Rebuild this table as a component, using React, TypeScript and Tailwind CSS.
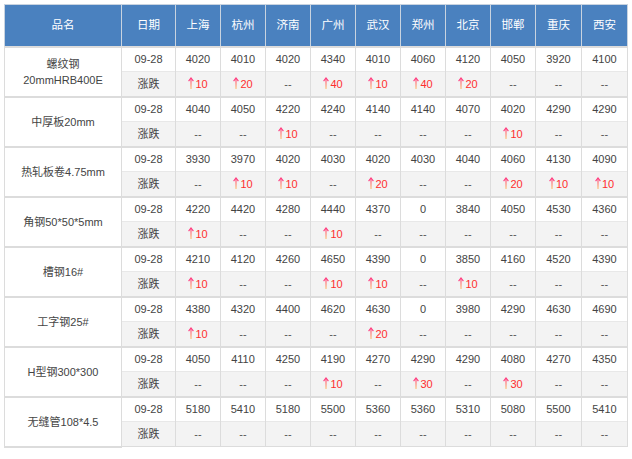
import React from 'react';

type Item = {
  name: string[];
  prices: number[];
  changes: (number | null)[];
};

const cities = ['上海', '杭州', '济南', '广州', '武汉', '郑州', '北京', '邯郸', '重庆', '西安'];
const cityWidths = [45, 45, 45, 45, 45, 45, 45, 45, 46, 46];

const items: Item[] = [
  {
    name: ['螺纹钢', '20mmHRB400E'],
    prices: [4020, 4010, 4020, 4340, 4010, 4060, 4120, 4050, 3920, 4100],
    changes: [10, 20, null, 40, 10, 40, 20, null, null, null],
  },
  {
    name: ['中厚板20mm'],
    prices: [4040, 4050, 4220, 4240, 4140, 4140, 4070, 4020, 4290, 4290],
    changes: [null, null, 10, null, null, null, null, 10, null, null],
  },
  {
    name: ['热轧板卷4.75mm'],
    prices: [3930, 3970, 4020, 4030, 4020, 4030, 4040, 4060, 4130, 4090],
    changes: [null, 10, 10, null, 20, null, null, 20, 10, 10],
  },
  {
    name: ['角钢50*50*5mm'],
    prices: [4220, 4420, 4280, 4440, 4370, 0, 3840, 4050, 4530, 4360],
    changes: [10, null, null, 10, null, null, null, null, null, null],
  },
  {
    name: ['槽钢16#'],
    prices: [4210, 4120, 4260, 4650, 4390, 0, 3850, 4160, 4520, 4390],
    changes: [10, null, null, 10, 10, null, 10, null, null, null],
  },
  {
    name: ['工字钢25#'],
    prices: [4380, 4320, 4400, 4620, 4630, 0, 3980, 4290, 4630, 4690],
    changes: [10, null, null, null, 20, null, null, null, null, null],
  },
  {
    name: ['H型钢300*300'],
    prices: [4050, 4110, 4250, 4190, 4270, 4290, 4290, 4080, 4270, 4350],
    changes: [null, null, null, 10, null, 30, null, 30, null, null],
  },
  {
    name: ['无缝管108*4.5'],
    prices: [5180, 5410, 5180, 5500, 5360, 5360, 5310, 5080, 5500, 5410],
    changes: [null, null, null, null, null, null, null, null, null, null],
  },
];

const UpArrow = () => (
  <svg width="6" height="12" viewBox="0 0 6 12" className="inline-block align-[-1px] mr-[1px]">
    <defs>
      <linearGradient id="upg" gradientUnits="userSpaceOnUse" x1="0" y1="1" x2="0" y2="12">
        <stop offset="0" stopColor="#ff3d7f" />
        <stop offset="1" stopColor="#ffc878" />
      </linearGradient>
    </defs>
    <rect x="2.4" y="1.5" width="1.2" height="10.5" fill="url(#upg)" />
    <path d="M0.6 4.2 L3 1 L5.4 4.2" stroke="#ff3d7f" strokeWidth="1.1" fill="none" />
  </svg>
);

const Change = ({ v }: { v: number | null }) =>
  v === null ? (
    <span className="text-[#555]">--</span>
  ) : (
    <span className="text-[#ff2d2d] font-medium">
      <UpArrow />
      {v}
    </span>
  );

export default function App() {
  return (
    <div
      className="w-[632px] h-[459px] bg-white pt-[4px] pl-[4px]"
      style={{ fontFamily: '"Liberation Sans", "Noto Sans CJK SC", sans-serif' }}
    >
      <table className="border-collapse table-fixed w-[623px] text-[11px] text-[#444] border border-[#dcdcdc]">
        <colgroup>
          <col className="w-[117px]" />
          <col className="w-[54px]" />
          {cityWidths.map((w, i) => (
            <col key={i} style={{ width: w }} />
          ))}
        </colgroup>
        <thead>
          <tr className="bg-[#4a81bf] text-white text-[11.5px] h-[42px]">
            <th className="font-normal border border-[#c8d3e0]">品名</th>
            <th className="font-normal border border-[#c8d3e0]">日期</th>
            {cities.map((c) => (
              <th key={c} className="font-normal border border-[#c8d3e0]">
                {c}
              </th>
            ))}
          </tr>
        </thead>
        <tbody>
          {items.map((it, gi) => (
            <React.Fragment key={gi}>
              <tr className="h-[25px] bg-white">
                <td
                  rowSpan={2}
                  className="text-center leading-[16px] border-l border-[#dcdcdc] border-t-2 border-t-[#dcdcdc] border-b-2 border-b-[#dcdcdc]"
                >
                  {it.name.map((n, k) => (
                    <div key={k}>{n}</div>
                  ))}
                </td>
                <td className="text-center border-l border-r border-[#dcdcdc] border-t-2 border-t-[#dcdcdc]">09-28</td>
                {it.prices.map((p, k) => (
                  <td key={k} className="text-center border-l border-r border-[#dcdcdc] border-t-2 border-t-[#dcdcdc]">
                    {p}
                  </td>
                ))}
              </tr>
              <tr className="h-[25px] bg-[#f3f3f3]">
                <td className="text-center border-l border-r border-[#dcdcdc] border-t border-t-[#e8e8e8]">涨跌</td>
                {it.changes.map((c, k) => (
                  <td key={k} className="text-center border-l border-r border-[#dcdcdc] border-t border-t-[#e8e8e8]">
                    <Change v={c} />
                  </td>
                ))}
              </tr>
            </React.Fragment>
          ))}
        </tbody>
      </table>
    </div>
  );
}
